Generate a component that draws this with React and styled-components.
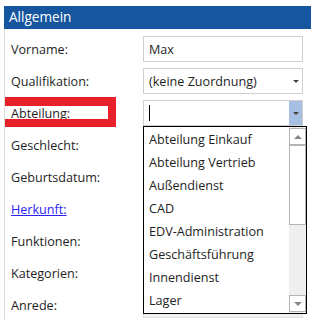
import React from 'react';
import styled, { createGlobalStyle } from 'styled-components';

const GlobalStyle = createGlobalStyle`
  body {
    margin: 0;
    background: #fff;
    font-family: "Open Sans", "Noto Sans", sans-serif;
    font-size: 12.6px;
    color: #1e1e1e;
    overflow: hidden;
  }
`;

const Panel = styled.section`
  margin: 6px 0 0 4px;
`;

const Header = styled.div`
  height: 23px;
  background: #15569e;
  color: #fff;
  font-size: 13.6px;
  line-height: 22px;
  padding-left: 5px;
`;

const Body = styled.div`
  border-left: 1px solid #dcdcdc;
  padding: 4px 0 0 6px;
  height: 291px;
  box-sizing: border-box;
  overflow: hidden;
`;

const Row = styled.div`
  display: grid;
  grid-template-columns: 132px 160px;
  align-items: center;
  height: 32px;
  position: relative;
`;

const Label = styled.span`
  color: ${p => (p.link ? '#2a22f5' : '#1e1e1e')};
  text-decoration: ${p => (p.link ? 'underline' : 'none')};
`;

const Field = styled.div`
  position: relative;
  height: 26px;
  box-sizing: border-box;
  border: 1px solid ${p => (p.muted ? '#e0e0e0' : '#cfcfcf')};
  background: ${p => (p.muted ? '#f0f0f0' : '#fff')};
  display: flex;
  align-items: center;
  padding-left: 5px;
`;

const Arrow = styled.span`
  position: absolute;
  right: 0;
  top: 0;
  bottom: 0;
  width: 13px;
  display: flex;
  align-items: center;
  justify-content: center;
  background: ${p => (p.active ? '#a6bfe2' : 'transparent')};
  &:after {
    content: "";
    border-left: 3px solid transparent;
    border-right: 3px solid transparent;
    border-top: 3px solid #444;
  }
`;

const Caret = styled.span`
  width: 1px;
  height: 16px;
  background: #000;
`;

const Highlight = styled.div`
  position: absolute;
  left: -11px;
  top: 0;
  width: 116px;
  height: 30px;
  box-sizing: border-box;
  border-style: solid;
  border-color: #e8202a;
  border-width: 9px 8px 8px 5px;
`;

const ListBox = styled.div`
  position: absolute;
  top: 25px;
  left: -1px;
  width: 164px;
  height: 188px;
  box-sizing: border-box;
  border: 1px solid #000;
  background: #fff;
  z-index: 5;
  display: flex;
`;

const Items = styled.ul`
  list-style: none;
  margin: 0;
  padding: 1px 0 0;
  flex: 1;
`;

const Item = styled.li`
  height: 23px;
  line-height: 23px;
  padding-left: 5px;
  white-space: nowrap;
`;

const ScrollBar = styled.div`
  width: 17px;
  background: #efefef;
  display: flex;
  flex-direction: column;
`;

const ScrollButton = styled.div`
  height: 17px;
  box-sizing: border-box;
  border: 1px solid #b4b4b4;
  background: #fff;
  display: flex;
  align-items: center;
  justify-content: center;
  margin-top: ${p => (p.down ? 'auto' : '1px')};
  margin-bottom: ${p => (p.down ? '1px' : '0')};
  &:after {
    content: "";
    border-left: 4px solid transparent;
    border-right: 4px solid transparent;
    ${p => (p.down ? 'border-top' : 'border-bottom')}: 4px solid #888;
  }
`;

const Thumb = styled.div`
  height: 80px;
  box-sizing: border-box;
  border: 1px solid #b4b4b4;
  background: #fff;
`;

const Grip = styled.span`
  position: absolute;
  right: 1px;
  top: 1px;
  width: 2px;
  height: 2px;
  background: #333;
`;

const departments = [
  'Abteilung Einkauf',
  'Abteilung Vertrieb',
  'Außendienst',
  'CAD',
  'EDV-Administration',
  'Geschäftsführung',
  'Innendienst',
  'Lager',
];

const laterRows = [
  { label: 'Geschlecht:' },
  { label: 'Geburtsdatum:' },
  { label: 'Herkunft:', link: true },
  { label: 'Funktionen:' },
  { label: 'Kategorien:' },
  { label: 'Anrede:', grip: true },
];

export default function App() {
  return (
    <>
      <GlobalStyle />
      <Panel>
        <Header>Allgemein</Header>
        <Body>
          <Row>
            <Label>Vorname:</Label>
            <Field>Max</Field>
          </Row>
          <Row>
            <Label>Qualifikation:</Label>
            <Field>
              (keine Zuordnung)
              <Arrow />
            </Field>
          </Row>
          <Row>
            <Highlight />
            <Label>Abteilung:</Label>
            <Field>
              <Caret />
              <Arrow active />
              <ListBox>
                <Items>
                  {departments.map(d => (
                    <Item key={d}>{d}</Item>
                  ))}
                </Items>
                <ScrollBar>
                  <ScrollButton />
                  <Thumb />
                  <ScrollButton down />
                </ScrollBar>
              </ListBox>
            </Field>
          </Row>
          {laterRows.map(r => (
            <Row key={r.label}>
              <Label link={r.link}>{r.label}</Label>
              <Field muted>{r.grip && <Grip />}</Field>
            </Row>
          ))}
        </Body>
      </Panel>
    </>
  );
}
